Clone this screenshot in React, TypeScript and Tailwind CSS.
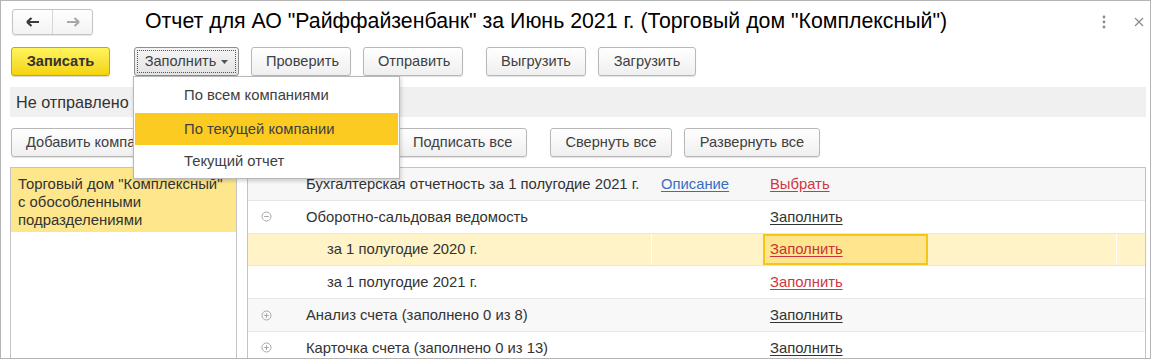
import React from 'react';

const font = { fontFamily: '"Liberation Sans", Arial, sans-serif' };

const Btn: React.FC<{ label: string; className?: string }> = ({ label, className = '' }) => (
  <button
    className={`h-[29px] px-[14px] rounded-[3px] border border-[#b8b8b8] bg-gradient-to-b from-white to-[#efefef] text-[14.6px] text-[#404040] shadow-[0_1px_1px_rgba(0,0,0,0.12)] whitespace-nowrap ${className}`}
  >
    {label}
  </button>
);

const Toggle: React.FC<{ open: boolean }> = ({ open }) => (
  <svg width="11" height="11" viewBox="0 0 11 11" className="shrink-0">
    <circle cx="5.5" cy="5.5" r="4.5" fill="none" stroke="#a8a8a8" strokeWidth="1" />
    <line x1="3.2" y1="5.5" x2="7.8" y2="5.5" stroke="#a8a8a8" strokeWidth="1" />
    {!open && <line x1="5.5" y1="3.2" x2="5.5" y2="7.8" stroke="#a8a8a8" strokeWidth="1" />}
  </svg>
);

type Row = {
  text: string;
  indent: 'top' | 'sub';
  toggle?: 'open' | 'closed';
  link2?: string;
  link3: string;
  link3Color: string;
  bg: string;
  active?: boolean;
};

const rows: Row[] = [
  { text: 'Бухгалтерская отчетность за 1 полугодие 2021 г.', indent: 'top', link2: 'Описание', link3: 'Выбрать', link3Color: 'text-[#d2353f] decoration-[#d2353f]', bg: 'bg-[#f7f7f7]' },
  { text: 'Оборотно-сальдовая ведомость', indent: 'top', toggle: 'open', link3: 'Заполнить', link3Color: 'text-[#333] decoration-[#333]', bg: 'bg-white' },
  { text: 'за 1 полугодие 2020 г.', indent: 'sub', link3: 'Заполнить', link3Color: 'text-[#c8323c] decoration-[#c8323c]', bg: 'bg-[#fff3c7]', active: true },
  { text: 'за 1 полугодие 2021 г.', indent: 'sub', link3: 'Заполнить', link3Color: 'text-[#d2353f] decoration-[#d2353f]', bg: 'bg-white' },
  { text: 'Анализ счета (заполнено 0 из 8)', indent: 'top', toggle: 'closed', link3: 'Заполнить', link3Color: 'text-[#333] decoration-[#333]', bg: 'bg-[#f8f8f8]' },
  { text: 'Карточка счета (заполнено 0 из 13)', indent: 'top', toggle: 'closed', link3: 'Заполнить', link3Color: 'text-[#333] decoration-[#333]', bg: 'bg-white' },
];

export default function App() {
  return (
    <div style={font} className="relative w-[1151px] h-[359px] overflow-hidden bg-white border border-[#b4b4b4] text-[#333]">
      {/* header */}
      <div className="flex items-center h-[26px] mt-[8px] pl-[11px]">
        <div className="flex h-[26px] w-[81px] rounded-[3px] border border-[#c4c4c4] bg-gradient-to-b from-white to-[#f3f3f3] shadow-[0_1px_1px_rgba(0,0,0,0.1)]">
          <div className="flex-1 flex items-center justify-center border-r border-[#d6d6d6]">
            <svg width="14" height="10" viewBox="0 0 14 10">
              <path d="M1 5h12M1 5l4.5-4M1 5l4.5 4" stroke="#3a3a3a" strokeWidth="2.2" fill="none" />
            </svg>
          </div>
          <div className="flex-1 flex items-center justify-center">
            <svg width="14" height="10" viewBox="0 0 14 10">
              <path d="M1 5h12M13 5l-4.5-4M13 5l-4.5 4" stroke="#a8a8a8" strokeWidth="2.2" fill="none" />
            </svg>
          </div>
        </div>
        <h1 className="ml-[52px] text-[21.3px] leading-none text-black whitespace-nowrap">
          Отчет для АО "Райффайзенбанк" за Июнь 2021 г. (Торговый дом "Комплексный")
        </h1>
        <div className="ml-auto flex items-center mr-[6px]">
          <svg width="4" height="14" viewBox="0 0 4 14" className="mr-[28px]">
            <circle cx="2" cy="2" r="1.4" fill="#8a8a8a" />
            <circle cx="2" cy="7" r="1.4" fill="#8a8a8a" />
            <circle cx="2" cy="12" r="1.4" fill="#8a8a8a" />
          </svg>
          <svg width="10" height="10" viewBox="0 0 10 10">
            <path d="M1 1l8 8M9 1l-8 8" stroke="#8a8a8a" strokeWidth="1.2" />
          </svg>
        </div>
      </div>

      {/* main toolbar */}
      <div className="flex items-center mt-[12px] pl-[10px]">
        <button className="h-[29px] w-[99px] rounded-[3px] border border-[#c9a800] bg-gradient-to-b from-[#fff45a] to-[#f3d300] text-[14.6px] font-bold text-[#333] shadow-[0_1px_1px_rgba(0,0,0,0.15)]">
          Записать
        </button>
        <div className="relative ml-[24px] h-[29px] w-[105px] rounded-[3px] border border-[#8e8e8e] bg-gradient-to-b from-[#f4f4f4] to-[#e4e4e4] flex items-center justify-center text-[14.6px] text-[#404040]">
          <div className="absolute inset-[2px] border border-dotted border-[#555]" />
          <span>Заполнить</span>
          <svg width="7" height="4" viewBox="0 0 7 4" className="ml-[5px]">
            <path d="M0 0h7L3.5 4z" fill="#555" />
          </svg>
        </div>
        <Btn label="Проверить" className="ml-[12px] w-[100px]" />
        <Btn label="Отправить" className="ml-[12px] w-[100px]" />
        <Btn label="Выгрузить" className="ml-[23px] w-[100px]" />
        <Btn label="Загрузить" className="ml-[12px] w-[98px]" />
      </div>

      {/* status */}
      <div className="mt-[11px] ml-[9px] mr-[4px] h-[30px] bg-[#f0f0f0] flex items-center pl-[6px] text-[16.2px] text-[#333]">
        Не отправлено
      </div>

      {/* secondary toolbar */}
      <div className="flex items-center mt-[11px] pl-[10px]">
        <Btn label="Добавить компанию" className="w-[170px] text-left" />
        <Btn label="Подписать все" className="ml-[217px] w-[129px]" />
        <Btn label="Свернуть все" className="ml-[23px] w-[122px]" />
        <Btn label="Развернуть все" className="ml-[12px] w-[136px]" />
      </div>

      {/* content */}
      <div className="flex mt-[10px] pl-[9px] pr-[4px] h-[200px]">
        <div className="w-[227px] h-full border border-[#c4c4c4] border-b-0 bg-white">
          <div className="h-[64px] bg-[#fde68c] border-b border-[#e2e2e2] px-[7px] pt-[7px] text-[14.9px] leading-[18px] text-[#333]">
            Торговый дом "Комплексный"
            <br />с обособленными
            <br />подразделениями
          </div>
        </div>
        <div className="ml-[10px] flex-1 h-full border border-[#c4c4c4] border-b-0 bg-white">
          {rows.map((r, i) => (
            <div key={i} className={`flex h-[32.8px] border-b border-[#e6e6e6] text-[14.8px] ${r.bg}`}>
              <div className={`w-[404px] flex items-center ${r.active ? 'border-r border-white' : ''}`}>
                <div className="w-[58px] flex justify-end pr-[34px]">
                  {r.toggle && <Toggle open={r.toggle === 'open'} />}
                </div>
                <span className={`whitespace-nowrap ${r.indent === 'sub' ? 'pl-[21px]' : ''}`}>{r.text}</span>
              </div>
              <div className="w-[111px] flex items-center pl-[9px]">
                {r.link2 && <span className="underline underline-offset-2 text-[#3b6dc3] decoration-[#3b6dc3]">{r.link2}</span>}
              </div>
              <div
                className={`w-[165px] flex items-center ${
                  r.active ? 'pl-[5px] bg-[#ffe58e] border-2 border-[#f6c616]' : 'pl-[7px]'
                }`}
              >
                <span className={`underline underline-offset-2 ${r.link3Color}`}>{r.link3}</span>
              </div>
              <div className={`w-[189px] ${r.active ? 'border-r border-white' : ''}`} />
              <div className="flex-1" />
            </div>
          ))}
        </div>
      </div>

      {/* dropdown menu */}
      <div className="absolute left-[132px] top-[75px] w-[267px] h-[103px] bg-white border border-[#b8b8b8] shadow-[1px_2px_4px_rgba(0,0,0,0.18)] text-[14.8px] text-[#404040]">
        <div className="h-[36px] flex items-center pl-[50px]">По всем компаниями</div>
        <div className="h-[32px] mx-[1px] flex items-center pl-[49px] bg-[#fbcb22]">По текущей компании</div>
        <div className="h-[33px] flex items-center pl-[50px]">Текущий отчет</div>
      </div>
    </div>
  );
}
